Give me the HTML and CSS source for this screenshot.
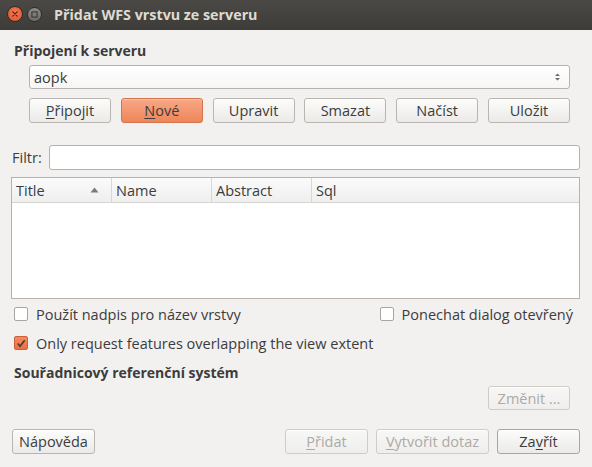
FILE: index.html
```html
<!DOCTYPE html>
<html>
<head>
<meta charset="utf-8">
<link rel="stylesheet" href="styles.css">
</head>
<body>
<div class="window">
  <div class="titlebar">
    <span class="wbtn close"><svg width="16" height="16" viewBox="0 0 16 16"><path d="M5.5 5.5 L10.5 10.5 M10.5 5.5 L5.5 10.5" stroke="#4a2418" stroke-width="1.4" stroke-linecap="round"/></svg></span>
    <span class="wbtn max"><svg width="15" height="15" viewBox="0 0 15 15"><rect x="4.5" y="4.5" width="6" height="6" fill="none" stroke="#3a3a37" stroke-width="1.3"/></svg></span>
    <span class="title">Přidat WFS vrstvu ze serveru</span>
  </div>
  <div class="content">
    <div class="heading">Připojení k serveru</div>
    <div class="conn">
      <div class="combo"><span>aopk</span><svg class="spin" width="7" height="10" viewBox="0 0 7 10"><path d="M1 4 L3.5 1.5 L6 4 Z M1 6 L3.5 8.5 L6 6 Z" fill="#6a6a6a"/></svg></div>
      <div class="btnrow">
        <button class="btn"><u>P</u>řipojit</button>
        <button class="btn hot"><u>N</u>ové</button>
        <button class="btn">Upravit</button>
        <button class="btn">Smazat</button>
        <button class="btn">Načíst</button>
        <button class="btn">Uložit</button>
      </div>
    </div>
    <div class="filter">
      <span class="flabel">Filtr:</span>
      <div class="input"></div>
    </div>
    <div class="table">
      <div class="thead">
        <div class="th c1">Title<svg width="9" height="6" viewBox="0 0 9 6"><path d="M0.5 5.5 L4.5 0.5 L8.5 5.5 Z" fill="#7a7a7a"/></svg></div>
        <div class="th c2">Name</div>
        <div class="th c3">Abstract</div>
        <div class="th c4">Sql</div>
      </div>
    </div>
    <div class="checks">
      <div class="crow">
        <label class="chk"><span class="box"></span>Použít nadpis pro název vrstvy</label>
        <label class="chk"><span class="box"></span>Ponechat dialog otevřený</label>
      </div>
      <div class="crow">
        <label class="chk"><span class="box on"><svg width="13" height="13" viewBox="0 0 13 13"><path d="M3 6.5 L5.5 9.5 L10.5 3" fill="none" stroke="#4a3a30" stroke-width="1.8"/></svg></span>Only request features overlapping the view extent</label>
      </div>
    </div>
    <div class="heading crs">Souřadnicový referenční systém</div>
    <div class="changerow"><button class="btn dis">Změnit ...</button></div>
    <div class="footer">
      <button class="btn help">Nápověda</button>
      <div class="fright">
        <button class="btn dis w83"><u>P</u>řidat</button>
        <button class="btn dis w113"><u>V</u>ytvořit dotaz</button>
        <button class="btn w83 def">Za<u>v</u>řít</button>
      </div>
    </div>
  </div>
</div>
</body>
</html>
```
FILE: styles.css
```css
* { box-sizing: border-box; }
html, body { margin: 0; padding: 0; }
body {
  width: 592px; height: 467px; overflow: hidden;
  font-family: "Open Sans", "Noto Sans", sans-serif;
  font-size: 14.5px; color: #3c3c3c;
  background: #f2f1f0;
}
.window { width: 592px; height: 467px; display: flex; flex-direction: column; }
.titlebar {
  height: 30px; flex: none;
  background: linear-gradient(#4a4945, #3d3c38);
  display: flex; align-items: center; padding-left: 7px; padding-bottom: 2px;
}
.wbtn { width: 16px; height: 16px; border-radius: 50%; display: flex; align-items: center; justify-content: center; }
.close { background: radial-gradient(circle at 50% 40%, #f77b52, #e0522a); border: 1px solid #2e2d2a; }
.max { width: 15px; height: 15px; margin-left: 4px; background: linear-gradient(#8c8b87, #6d6c68); border: 1px solid #2e2d2a; }
.title { margin-left: 12px; color: #dfdbd2; font-weight: bold; font-size: 14.3px; }
.content { flex: 1; padding: 11px 12px 0 11px; display: flex; flex-direction: column; }
.heading { font-weight: bold; font-size: 14px; padding-left: 3px; height: 20px; line-height: 20px; }
.conn { padding-left: 18px; padding-right: 10px; margin-top: 4px; }
.combo {
  height: 24px; border: 1px solid #b6b3ae; border-radius: 3px; background: linear-gradient(#ffffff, #f6f6f5);
  display: flex; align-items: center; justify-content: space-between; padding: 0 8px 0 4px;
}
.btnrow { display: flex; justify-content: space-between; margin-top: 9px; }
.btn {
  font: inherit; color: #3c3c3c; width: 82px; height: 25px; padding: 0;
  border: 1px solid #b9b6b1; border-radius: 3px;
  background: linear-gradient(#fcfcfb, #ebeae8);
  box-shadow: inset 0 1px 0 #ffffff;
}
.btn u { text-decoration: underline; text-underline-offset: 2px; }
.hot { background: linear-gradient(#f7a887, #ef8558); border-color: #d3744f; box-shadow: inset 0 1px 0 #fbbfa5; }
.dis { color: #acaaa6; border-color: #cfccc8; background: linear-gradient(#f7f7f6, #efeeed); }
.filter { display: flex; align-items: center; margin-top: 22px; }
.flabel { margin-left: 1px; width: 37px; }
.input { flex: 1; height: 25px; border: 1px solid #b6b3ae; border-radius: 3px; background: #ffffff; }
.table { margin-top: 7px; height: 122px; border: 1px solid #b6b3ae; background: #ffffff; }
.thead { display: flex; height: 25px; border-bottom: 1px solid #d6d4d1; background: linear-gradient(#fbfbfb, #efefee); }
.th { display: flex; align-items: center; justify-content: space-between; padding: 0 12px 0 4px; border-right: 1px solid #d9d7d4; height: 100%; }
.c1 { width: 100px; }
.c2 { width: 100px; }
.c3 { width: 100px; }
.c4 { flex: 1; border-right: none; }
.checks { margin-top: 7px; padding-left: 3px; padding-right: 7px; }
.crow { display: flex; justify-content: space-between; height: 29px; align-items: flex-start; }
.crow + .crow { height: 28px; }
.chk { display: flex; align-items: center; height: 16px; }
.box {
  width: 14px; height: 14px; border: 1px solid #a9a6a2; border-radius: 2px; background: #ffffff;
  margin-right: 8px; display: flex; align-items: center; justify-content: center;
}
.box.on { background: linear-gradient(#f58a5e, #ea7040); border-color: #c9603a; }
.crs { margin-top: 0; }
.changerow { display: flex; justify-content: flex-end; padding-right: 10px; margin-top: 3px; }
.changerow .btn { height: 24px; }
.footer { display: flex; justify-content: space-between; margin-top: 19px; padding-left: 1px; }
.help { width: 83px; }
.fright { display: flex; gap: 8px; }
.w83 { width: 83px; }
.w113 { width: 113px; }
.def { border-color: #a9a6a2; }
```
